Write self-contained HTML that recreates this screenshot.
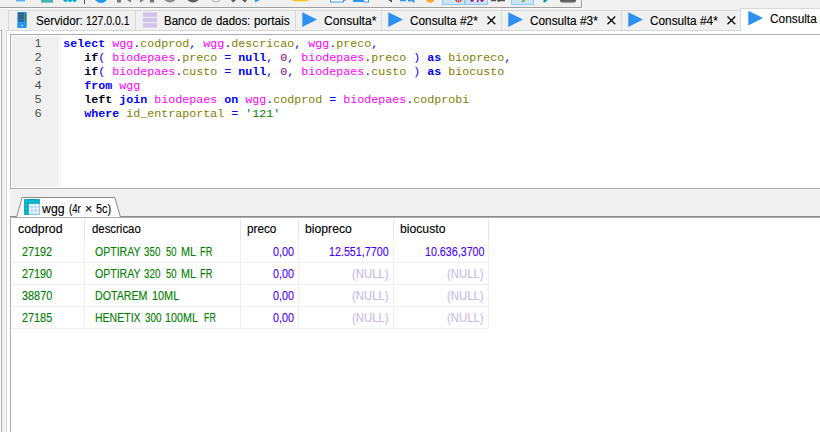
<!DOCTYPE html>
<html>
<head>
<meta charset="utf-8">
<title>HeidiSQL</title>
<style>
html,body{margin:0;padding:0;}
html{overflow:hidden;width:820px;height:432px;}
#root{position:absolute;left:0;top:0;width:820px;height:432px;overflow:hidden;contain:strict;background:#f0f0f0;}
body{width:820px;height:432px;overflow:hidden;background:#f0f0f0;position:relative;font-family:"Liberation Sans",sans-serif;font-size:12px;color:#000;}
.a{position:absolute;}
.t{position:absolute;white-space:pre;line-height:14px;height:14px;font-size:12px;transform-origin:0 0;-webkit-text-stroke:0.12px;}
.code{position:absolute;left:63.3px;white-space:pre;font-family:"Liberation Mono",monospace;font-size:11.6667px;line-height:14px;height:14px;color:#000;}
.ln{position:absolute;left:12px;width:29.6px;text-align:right;font-family:"Liberation Sans",sans-serif;font-size:11px;line-height:14px;height:14px;color:#4a4a4a;transform:scaleX(1.1);transform-origin:100% 0;}
.k{color:#0000ff;font-weight:bold;-webkit-text-stroke:0;}
.f{color:#000018;font-weight:bold;-webkit-text-stroke:0;}
.s{color:#0000ff;}
.tb{color:#ff00ff;}
.c{color:#808000;}
.n{color:#800080;}
.st{color:#008000;}
.sep{position:absolute;top:11px;width:1px;height:19px;background:#d9d9d9;}
.g{color:#008000;}
.r{color:#4800ff;text-align:right;}
.nl{color:#c4b2e6;text-align:right;}
</style>
</head>
<body>
<div id="root">

<!-- toolbar strip -->
<div class="a" style="left:0;top:7px;width:582px;height:1px;background:#a0a0a0;"></div>
<div class="a" style="left:0;top:8px;width:582px;height:1px;background:#fafafa;"></div>
<div class="a" style="left:581px;top:0;width:1px;height:8px;background:#a0a0a0;"></div>
<div class="a" style="left:582px;top:0;width:1px;height:9px;background:#fafafa;"></div>
<svg class="a" style="left:0;top:0;" width="581" height="7" viewBox="0 0 581 7">
  <rect x="16" y="0" width="9" height="1.4" fill="#4db2ff"/>
  <rect x="41" y="0" width="12" height="2.7" fill="#4db6ac"/>
  <circle cx="65.5" cy="-0.3" r="2.2" fill="#00acc1"/>
  <circle cx="70" cy="-0.3" r="2.2" fill="#00acc1"/>
  <circle cx="74.5" cy="-0.3" r="2.2" fill="#00acc1"/>
  <rect x="84" y="0" width="1" height="4" fill="#555"/>
  <circle cx="101" cy="-4" r="7" fill="#2196f3"/>
  <rect x="117" y="0" width="4" height="2.5" fill="#757575"/>
  <path d="M127 0 L131 0 L131 2.5 Z" fill="#757575"/>
  <path d="M140 0 L144 0 L140 2.5 Z" fill="#757575"/>
  <rect x="150" y="0" width="4" height="2.5" fill="#757575"/>
  <circle cx="170" cy="-4.5" r="7" fill="#909090"/>
  <circle cx="193" cy="-4.5" r="7" fill="#606060"/>
  <circle cx="216" cy="-4.5" r="6.5" fill="#e8e8e8" stroke="#b0b0b0" stroke-width="1"/>
  <path d="M231 0 L236 0 L233 2.5 Z" fill="#555"/>
  <path d="M242 0 L247 0 L245 2.5 Z" fill="#555"/>
  <path d="M255 0 L260 0 L255 2.5 Z" fill="#2196f3"/>
  <rect x="293" y="0" width="15" height="1.2" fill="#ffc107"/>
  <rect x="330.5" y="-2" width="13" height="4" fill="#fff" stroke="#3f9ae8" stroke-width="1"/>
  <rect x="343" y="-1" width="3" height="1.8" fill="#3f9ae8"/>
  <rect x="353" y="-1" width="10" height="3" fill="#2196f3"/>
  <rect x="363.5" y="-2" width="5" height="4" fill="#fff" stroke="#3f9ae8" stroke-width="1"/>
  <path d="M388 0 L392 0 L392 2.5 Z" fill="#555"/>
  <rect x="400" y="0" width="6" height="1.2" fill="#2196f3"/>
  <rect x="408" y="0" width="3" height="1.5" fill="#2196f3"/>
  <path d="M411 0 L414 0 L415 2 L413 2.5 Z" fill="#2196f3"/>
  <path d="M426 0 L434 0 L433 2 L430 3 L427 1.5 Z" fill="#ffa726"/>
  <rect x="442.5" y="-2" width="22" height="6.5" fill="#cce4f7" stroke="#90c8f6" stroke-width="1"/>
  <circle cx="458.5" cy="-1.2" r="3.6" fill="#e53935"/>
  <rect x="457.2" y="0" width="0.9" height="1.3" fill="#fff"/><rect x="459" y="0" width="0.9" height="1.3" fill="#fff"/>
  <rect x="465.5" y="-2" width="22" height="6.5" fill="#cce4f7" stroke="#90c8f6" stroke-width="1"/>
  <path d="M470 0 Q472 4 474 0 Z M477 0 L478.5 0 L478.5 2.3 L477 2.3 Z M480 0 Q482 4 484 0 Z" fill="#9c1f6e"/>
  <path d="M491 0 L496 0 L496 1.2 L491 1.2 Z M497 0 L505 0 L505 1.2 L500 1.2 L499 2.2 L498 1.2 L497 1.2 Z" fill="#555"/>
  <rect x="511.5" y="-2" width="22" height="6.5" fill="#cce4f7" stroke="#90c8f6" stroke-width="1"/>
  <path d="M522 0 L525.5 0 L524 2 L521.5 2.5 Z" fill="#7cb342"/>
  <path d="M544 0 L547.5 0 L545 2.5 L543 2 Z" fill="#0097a7"/>
  <rect x="560" y="-3" width="16" height="5.5" rx="2" fill="#616161"/>
</svg>

<!-- left tree sliver -->
<div class="a" style="left:0;top:31px;width:1px;height:401px;background:#fff;"></div>
<div class="a" style="left:0;top:30px;width:2px;height:1px;background:#abadb3;"></div>
<div class="a" style="left:1px;top:30px;width:1px;height:402px;background:#abadb3;"></div>

<!-- tab strip (inactive tabs) -->
<div class="a" style="left:8px;top:10px;width:732px;height:1px;background:#d9d9d9;"></div>
<div class="a" style="left:8px;top:10px;width:1px;height:20px;background:#d9d9d9;"></div>
<div class="sep" style="left:135px;"></div>
<div class="sep" style="left:295px;"></div>
<div class="sep" style="left:381px;"></div>
<div class="sep" style="left:501px;"></div>
<div class="sep" style="left:621px;"></div>

<!-- tab page -->
<div class="a" style="left:6px;top:30px;width:814px;height:402px;background:#fff;border-left:1px solid #d9d9d9;border-top:1px solid #d9d9d9;box-sizing:border-box;"></div>
<!-- active tab -->
<div class="a" style="left:740px;top:8px;width:80px;height:23px;background:#fff;border-left:1px solid #d9d9d9;border-top:1px solid #d9d9d9;box-sizing:border-box;"></div>

<!-- tab icons -->
<svg class="a" style="left:17px;top:12px;" width="11" height="16" viewBox="-0.35 0 11 16">
  <rect x="0" y="0" width="9.4" height="16" rx="0.9" fill="#2196f3"/>
  <rect x="0.9" y="0.8" width="7.6" height="8.6" fill="#2b7cc0"/>
  <rect x="0.9" y="0.95" width="7.6" height="1.3" fill="#30526c"/>
  <rect x="6.5" y="0.95" width="1.2" height="1.3" fill="#7cb342"/>
  <rect x="0.9" y="3.30" width="7.6" height="1.3" fill="#30526c"/>
  <rect x="6.5" y="3.30" width="1.2" height="1.3" fill="#7cb342"/>
  <rect x="0.9" y="5.65" width="7.6" height="1.3" fill="#30526c"/>
  <rect x="6.5" y="5.65" width="1.2" height="1.3" fill="#7cb342"/>
  <rect x="0.9" y="8.00" width="7.6" height="1.3" fill="#30526c"/>
  <rect x="6.5" y="8.00" width="1.2" height="1.3" fill="#7cb342"/>
  <rect x="4.2" y="12.8" width="1.4" height="1.4" fill="#e8f4ff"/>
</svg>
<svg class="a" style="left:143px;top:12px;" width="14" height="16" viewBox="0 0 14 16">
  <rect x="0" y="0.4" width="14" height="4.4" fill="#d1c4e9"/>
  <rect x="0" y="5.8" width="14" height="4.4" fill="#d1c4e9"/>
  <rect x="0" y="11.2" width="14" height="4.4" fill="#d1c4e9"/>
</svg>
<svg class="a" style="left:302px;top:12px;" width="16" height="16" viewBox="0 0 16 16"><path d="M0.3 0.3 L15 7.6 L0.3 15 Z" fill="#2b90f2"/></svg>
<svg class="a" style="left:388px;top:12px;" width="16" height="16" viewBox="0 0 16 16"><path d="M0.3 0.3 L15 7.6 L0.3 15 Z" fill="#2b90f2"/></svg>
<svg class="a" style="left:508px;top:12px;" width="16" height="16" viewBox="0 0 16 16"><path d="M0.3 0.3 L15 7.6 L0.3 15 Z" fill="#2b90f2"/></svg>
<svg class="a" style="left:628px;top:12px;" width="16" height="16" viewBox="0 0 16 16"><path d="M0.3 0.3 L15 7.6 L0.3 15 Z" fill="#2b90f2"/></svg>
<svg class="a" style="left:748px;top:10px;" width="16" height="16" viewBox="0 -0.4 16 16"><path d="M0.3 0.3 L15 7.6 L0.3 15 Z" fill="#2b90f2"/></svg>

<!-- close X -->
<svg class="a" style="left:486.7px;top:15.5px;" width="9" height="9" viewBox="0 0 9 9"><path d="M0.5 0.5 L8.2 8.2 M8.2 0.5 L0.5 8.2" stroke="#000" stroke-width="1.25" fill="none"/></svg>
<svg class="a" style="left:606.7px;top:15.5px;" width="9" height="9" viewBox="0 0 9 9"><path d="M0.5 0.5 L8.2 8.2 M8.2 0.5 L0.5 8.2" stroke="#000" stroke-width="1.25" fill="none"/></svg>
<svg class="a" style="left:726.7px;top:15.5px;" width="9" height="9" viewBox="0 0 9 9"><path d="M0.5 0.5 L8.2 8.2 M8.2 0.5 L0.5 8.2" stroke="#000" stroke-width="1.25" fill="none"/></svg>

<!-- tab texts -->

<!-- editor -->
<div class="a" style="left:10px;top:34px;width:812px;height:155px;box-sizing:border-box;border:1px solid #abadb3;background:#fff;"></div>
<div class="a" style="left:12px;top:36px;width:47px;height:151px;background:#f0f0f0;"></div>
<div class="a" style="left:60px;top:36px;width:1px;height:151px;background:#f0f0f0;"></div>

<div class="ln" style="top:36px;">1</div>
<div class="ln" style="top:50px;">2</div>
<div class="ln" style="top:64px;">3</div>
<div class="ln" style="top:78px;">4</div>
<div class="ln" style="top:92px;">5</div>
<div class="ln" style="top:106px;">6</div>

<div class="code" style="top:37px;"><span class="k">select</span> <span class="tb">wgg</span><span class="s">.</span><span class="c">codprod</span><span class="s">,</span> <span class="tb">wgg</span><span class="s">.</span><span class="c">descricao</span><span class="s">,</span> <span class="tb">wgg</span><span class="s">.</span><span class="c">preco</span><span class="s">,</span></div>
<div class="code" style="top:51px;">   <span class="f">if</span><span class="s">(</span> <span class="tb">biodepaes</span><span class="s">.</span><span class="c">preco</span> <span class="s">=</span> <span class="k">null</span><span class="s">,</span> <span class="n">0</span><span class="s">,</span> <span class="tb">biodepaes</span><span class="s">.</span><span class="c">preco</span> <span class="s">)</span> <span class="k">as</span> <span class="c">biopreco</span><span class="s">,</span></div>
<div class="code" style="top:65px;">   <span class="f">if</span><span class="s">(</span> <span class="tb">biodepaes</span><span class="s">.</span><span class="c">custo</span> <span class="s">=</span> <span class="k">null</span><span class="s">,</span> <span class="n">0</span><span class="s">,</span> <span class="tb">biodepaes</span><span class="s">.</span><span class="c">custo</span> <span class="s">)</span> <span class="k">as</span> <span class="c">biocusto</span></div>
<div class="code" style="top:79px;">   <span class="k">from</span> <span class="tb">wgg</span></div>
<div class="code" style="top:93px;">   <span class="f">left</span> <span class="k">join</span> <span class="tb">biodepaes</span> <span class="k">on</span> <span class="tb">wgg</span><span class="s">.</span><span class="c">codprod</span> <span class="s">=</span> <span class="tb">biodepaes</span><span class="s">.</span><span class="c">codprobi</span></div>
<div class="code" style="top:107px;">   <span class="k">where</span> <span class="c">id_entraportal</span> <span class="s">=</span> <span class="st">'121'</span></div>

<!-- panel between editor and grid -->
<div class="a" style="left:10px;top:189px;width:810px;height:27px;background:#f0f0f0;"></div>

<!-- result grid frame -->
<div class="a" style="left:10px;top:216px;width:810px;height:1px;background:#8c8c8c;"></div>
<div class="a" style="left:10px;top:217px;width:812px;height:220px;box-sizing:border-box;border:1px solid #abadb3;background:#fff;"></div>

<!-- result tab -->
<svg class="a" style="left:10px;top:196px;" width="120" height="21" viewBox="0 0 120 21">
  <path d="M6.6 21 L12.2 1.5 L104.8 1.5 L110.4 21 Z" fill="#fff"/>
  <path d="M6.6 21 L12.2 1.5 L104.8 1.5 L110.4 21" fill="none" stroke="#8c8c8c" stroke-width="1"/>
</svg>
<svg class="a" style="left:24px;top:199px;" width="16" height="16" viewBox="0 0 16 16">
  <rect x="0.1" y="0.1" width="15.8" height="15.8" rx="1" fill="#00a3b8"/>
  <rect x="4.7" y="4.7" width="11.1" height="11.1" fill="#b3d8fb"/>
  <rect x="1.2" y="1.2" width="2.4" height="2.4" fill="#00c6de"/>
  <rect x="1.2" y="4.9" width="2.4" height="2.4" fill="#00c6de"/>
  <rect x="1.2" y="8.5" width="2.4" height="2.4" fill="#00c6de"/>
  <rect x="1.2" y="12.1" width="2.4" height="2.4" fill="#00c6de"/>
  <rect x="4.9" y="1.2" width="2.4" height="2.4" fill="#00c6de"/>
  <rect x="5.0" y="5.0" width="2.2" height="2.2" fill="#fff"/>
  <rect x="5.0" y="8.6" width="2.2" height="2.2" fill="#fff"/>
  <rect x="5.0" y="12.2" width="2.2" height="2.2" fill="#fff"/>
  <rect x="8.5" y="1.2" width="2.4" height="2.4" fill="#00c6de"/>
  <rect x="8.6" y="5.0" width="2.2" height="2.2" fill="#fff"/>
  <rect x="8.6" y="8.6" width="2.2" height="2.2" fill="#fff"/>
  <rect x="8.6" y="12.2" width="2.2" height="2.2" fill="#fff"/>
  <rect x="12.1" y="1.2" width="2.4" height="2.4" fill="#00c6de"/>
  <rect x="12.2" y="5.0" width="2.2" height="2.2" fill="#fff"/>
  <rect x="12.2" y="8.6" width="2.2" height="2.2" fill="#fff"/>
  <rect x="12.2" y="12.2" width="2.2" height="2.2" fill="#fff"/>
</svg>

<!-- grid lines -->
<div class="a" style="left:84px;top:219px;width:1px;height:22px;background:#e5e5e5;"></div>
<div class="a" style="left:240px;top:219px;width:1px;height:22px;background:#e5e5e5;"></div>
<div class="a" style="left:298px;top:219px;width:1px;height:22px;background:#e5e5e5;"></div>
<div class="a" style="left:393px;top:219px;width:1px;height:22px;background:#e5e5e5;"></div>
<div class="a" style="left:488px;top:219px;width:1px;height:22px;background:#e5e5e5;"></div>
<div class="a" style="left:84px;top:241px;width:1px;height:88px;background:#f0f0f0;"></div>
<div class="a" style="left:240px;top:241px;width:1px;height:88px;background:#f0f0f0;"></div>
<div class="a" style="left:298px;top:241px;width:1px;height:88px;background:#f0f0f0;"></div>
<div class="a" style="left:393px;top:241px;width:1px;height:88px;background:#f0f0f0;"></div>
<div class="a" style="left:488px;top:241px;width:1px;height:88px;background:#f0f0f0;"></div>
<div class="a" style="left:11px;top:262px;width:478px;height:1px;background:#f0f0f0;"></div>
<div class="a" style="left:11px;top:284px;width:478px;height:1px;background:#f0f0f0;"></div>
<div class="a" style="left:11px;top:306px;width:478px;height:1px;background:#f0f0f0;"></div>
<div class="a" style="left:11px;top:328px;width:478px;height:1px;background:#f0f0f0;"></div>

<!-- grid header -->

<!-- rows -->




<div class="t" id="w0" style="left:35.60px;top:14px;color:#000;transform:scaleX(0.9747);">Servidor:</div>
<div class="t" id="w1" style="left:85.50px;top:14px;color:#000;transform:scaleX(0.8696);">127.0.0.1</div>
<div class="t" id="w2" style="left:163.50px;top:14px;color:#000;transform:scaleX(0.9619);">Banco</div>
<div class="t" id="w3" style="left:200.60px;top:14px;color:#000;transform:scaleX(0.8265);">de</div>
<div class="t" id="w4" style="left:215.50px;top:14px;color:#000;transform:scaleX(0.9518);">dados:</div>
<div class="t" id="w5" style="left:253.60px;top:14px;color:#000;transform:scaleX(0.9897);">portais</div>
<div class="t" id="w6" style="left:323.60px;top:14px;color:#000;transform:scaleX(1.0062);">Consulta*</div>
<div class="t" id="w7" style="left:409.60px;top:14px;color:#000;transform:scaleX(0.9824);">Consulta</div>
<div class="t" id="w8" style="left:459.50px;top:14px;color:#000;transform:scaleX(0.9894);">#2*</div>
<div class="t" id="w9" style="left:529.60px;top:14px;color:#000;transform:scaleX(0.9824);">Consulta</div>
<div class="t" id="w10" style="left:579.50px;top:14px;color:#000;transform:scaleX(0.9894);">#3*</div>
<div class="t" id="w11" style="left:649.60px;top:14px;color:#000;transform:scaleX(0.9824);">Consulta</div>
<div class="t" id="w12" style="left:699.50px;top:14px;color:#000;transform:scaleX(0.9894);">#4*</div>
<div class="t" id="w13" style="left:769.50px;top:12px;color:#000;transform:scaleX(0.9867);">Consulta</div>
<div class="t" id="w14" style="left:819.50px;top:12px;color:#000;transform:scaleX(0.9979);">#5*</div>
<div class="t" id="w15" style="left:41.50px;top:202px;color:#000;transform:scaleX(1.0244);">wgg</div>
<div class="t" id="w16" style="left:68.60px;top:202px;color:#000;transform:scaleX(0.8047);">(4r</div>
<div class="t" id="w17" style="left:84.60px;top:202px;color:#000;transform:scaleX(1.0430);">×</div>
<div class="t" id="w18" style="left:95.50px;top:202px;color:#000;transform:scaleX(0.9080);">5c)</div>
<div class="t" id="w19" style="left:17.50px;top:222px;color:#000;transform:scaleX(1.0267);">codprod</div>
<div class="t" id="w20" style="left:91.50px;top:222px;color:#000;transform:scaleX(0.9495);">descricao</div>
<div class="t" id="w21" style="left:246.60px;top:222px;color:#000;transform:scaleX(0.9791);">preco</div>
<div class="t" id="w22" style="left:304.50px;top:222px;color:#000;transform:scaleX(1.0169);">biopreco</div>
<div class="t" id="w23" style="left:399.50px;top:222px;color:#000;transform:scaleX(1.0161);">biocusto</div>
<div class="t" id="w24" style="left:21.50px;top:245px;color:#008000;transform:scaleX(0.9024);">27192</div>
<div class="t" id="w25" style="left:21.50px;top:267px;color:#008000;transform:scaleX(0.9012);">27190</div>
<div class="t" id="w26" style="left:21.50px;top:289px;color:#008000;transform:scaleX(0.9067);">38870</div>
<div class="t" id="w27" style="left:21.50px;top:311px;color:#008000;transform:scaleX(0.9052);">27185</div>
<div class="t" id="w28" style="left:94.60px;top:245px;color:#008000;transform:scaleX(0.8792);">OPTIRAY</div>
<div class="t" id="w29" style="left:143.60px;top:245px;color:#008000;transform:scaleX(0.8158);">350</div>
<div class="t" id="w30" style="left:165.60px;top:245px;color:#008000;transform:scaleX(0.7910);">50</div>
<div class="t" id="w31" style="left:180.60px;top:245px;color:#008000;transform:scaleX(0.8954);">ML</div>
<div class="t" id="w32" style="left:199.50px;top:245px;color:#008000;transform:scaleX(0.7737);">FR</div>
<div class="t" id="w33" style="left:94.60px;top:267px;color:#008000;transform:scaleX(0.8792);">OPTIRAY</div>
<div class="t" id="w34" style="left:143.60px;top:267px;color:#008000;transform:scaleX(0.8158);">320</div>
<div class="t" id="w35" style="left:165.60px;top:267px;color:#008000;transform:scaleX(0.7910);">50</div>
<div class="t" id="w36" style="left:180.60px;top:267px;color:#008000;transform:scaleX(0.8954);">ML</div>
<div class="t" id="w37" style="left:199.50px;top:267px;color:#008000;transform:scaleX(0.7737);">FR</div>
<div class="t" id="w38" style="left:94.50px;top:289px;color:#008000;transform:scaleX(0.8853);">DOTAREM</div>
<div class="t" id="w39" style="left:151.60px;top:289px;color:#008000;transform:scaleX(0.9071);">10ML</div>
<div class="t" id="w40" style="left:94.50px;top:311px;color:#008000;transform:scaleX(0.8761);">HENETIX</div>
<div class="t" id="w41" style="left:144.50px;top:311px;color:#008000;transform:scaleX(0.8295);">300</div>
<div class="t" id="w42" style="left:164.60px;top:311px;color:#008000;transform:scaleX(0.8961);">100ML</div>
<div class="t" id="w43" style="left:203.50px;top:311px;color:#008000;transform:scaleX(0.7376);">FR</div>
<div class="t" id="w44" style="left:272.50px;top:245px;color:#4800ff;transform:scaleX(0.8967);">0,00</div>
<div class="t" id="w45" style="left:272.50px;top:267px;color:#4800ff;transform:scaleX(0.8967);">0,00</div>
<div class="t" id="w46" style="left:272.50px;top:289px;color:#4800ff;transform:scaleX(0.8967);">0,00</div>
<div class="t" id="w47" style="left:272.50px;top:311px;color:#4800ff;transform:scaleX(0.8967);">0,00</div>
<div class="t" id="w48" style="left:328.50px;top:245px;color:#4800ff;transform:scaleX(0.8929);">12.551,7700</div>
<div class="t" id="w49" style="left:424.50px;top:245px;color:#4800ff;transform:scaleX(0.8913);">10.636,3700</div>
<div class="t" id="w50" style="left:351.60px;top:267px;color:#c9baea;transform:scaleX(0.9437);">(NULL)</div>
<div class="t" id="w51" style="left:446.60px;top:267px;color:#c9baea;transform:scaleX(0.9437);">(NULL)</div>
<div class="t" id="w52" style="left:351.60px;top:289px;color:#c9baea;transform:scaleX(0.9437);">(NULL)</div>
<div class="t" id="w53" style="left:446.60px;top:289px;color:#c9baea;transform:scaleX(0.9437);">(NULL)</div>
<div class="t" id="w54" style="left:351.60px;top:311px;color:#c9baea;transform:scaleX(0.9437);">(NULL)</div>
<div class="t" id="w55" style="left:446.60px;top:311px;color:#c9baea;transform:scaleX(0.9437);">(NULL)</div>
</div>
</body>
</html>
